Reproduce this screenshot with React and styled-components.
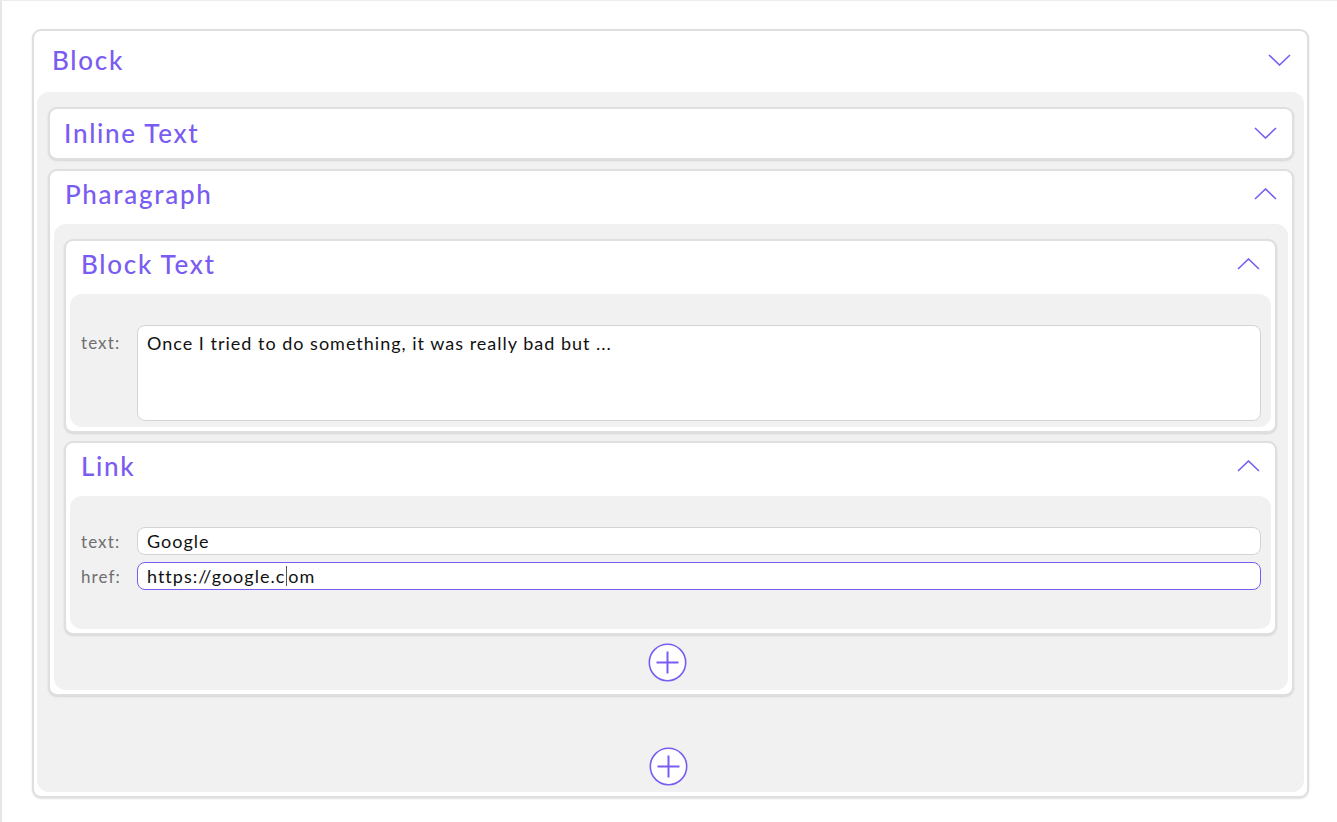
import React from 'react';
import styled, { createGlobalStyle } from 'styled-components';

const purple = '#7a5cf2';

const GlobalStyle = createGlobalStyle`
  html, body {
    margin: 0;
    background: #ffffff;
    font-family: 'Lato', 'Noto Sans', sans-serif;
  }
  * {
    box-sizing: border-box;
  }
`;

const Page = styled.div`
  min-height: 822px;
  border-left: 2px solid #e6e6e6;
  border-top: 1px solid #ececec;
  padding: 28px 28px 0 30px;
`;

const Card = styled.section`
  background: #ffffff;
  border: 2px solid #dfdfdf;
  border-radius: 9px;
  box-shadow: 0 1px 2px rgba(0, 0, 0, 0.12);
  padding: ${(p) => (p.$outer ? '0 3px 4px' : p.$open ? '0 4px 4px' : '0')};
`;

const Header = styled.div`
  display: flex;
  align-items: center;
  justify-content: space-between;
  height: ${(p) => (p.$outer ? '61px' : '49px')};
  padding: ${(p) =>
    p.$outer ? '0 13px 3px 15px' : p.$open ? '0 11px 3px 11px' : '0 15px 2px 14px'};
`;

const Title = styled.h2`
  margin: 0;
  font-size: 26px;
  font-weight: 500;
  color: ${purple};
  letter-spacing: 1.7px;
`;

const Chevron = styled.svg`
  width: 23px;
  height: 12px;
  flex-shrink: 0;
`;

const Body = styled.div`
  display: flex;
  flex-direction: column;
  gap: ${(p) => p.$gap || 8}px;
  background: #f1f1f1;
  border-radius: 12px;
  margin-top: ${(p) => (p.$outer ? 0 : 4)}px;
  padding: ${(p) => p.$pad};
`;

const FieldRow = styled.label`
  display: flex;
  align-items: ${(p) => (p.$top ? 'flex-start' : 'center')};
`;

const Label = styled.span`
  width: 56px;
  flex-shrink: 0;
  font-size: 17px;
  letter-spacing: 1.1px;
  color: #6f6f6f;
  padding-top: ${(p) => (p.$top ? '7px' : '0')};
`;

const Field = styled.div`
  flex: 1;
  display: flex;
  align-items: ${(p) => (p.$multi ? 'flex-start' : 'center')};
  height: ${(p) => (p.$multi ? '96px' : '28px')};
  background: #ffffff;
  border: 1.5px solid ${(p) => (p.$focused ? purple : '#d4d4d4')};
  border-radius: 8px;
  padding: ${(p) => (p.$multi ? '7px 9px' : '0 9px')};
  font-size: 18px;
  line-height: 20px;
  letter-spacing: 1px;
  color: #111111;
  white-space: pre;
`;

const Caret = styled.span`
  display: inline-block;
  width: 1px;
  height: 20px;
  background: #555555;
  margin: 0 1px;
`;

const AddRow = styled.div`
  display: flex;
  justify-content: center;
  padding-right: 6px;
  margin-top: ${(p) => p.$offset || 0}px;
`;

const AddButton = styled.button`
  width: 39px;
  height: 39px;
  padding: 0;
  border: none;
  background: transparent;
  cursor: pointer;
  display: flex;
  align-items: center;
  justify-content: center;
`;

const ChevronIcon = ({ up }) => (
  <Chevron viewBox="0 0 23 12" fill="none">
    <polyline
      points={up ? '1,11 11.5,1 22,11' : '1,1 11.5,11 22,1'}
      stroke={purple}
      strokeWidth="1.6"
      strokeLinejoin="miter"
    />
  </Chevron>
);

const PlusIcon = () => (
  <svg width="39" height="39" viewBox="0 0 39 39" fill="none">
    <circle cx="19.5" cy="19.5" r="18.2" fill="#ffffff" stroke={purple} strokeWidth="1.6" />
    <line x1="8.5" y1="19.5" x2="30.5" y2="19.5" stroke={purple} strokeWidth="2" />
    <line x1="19.5" y1="8.5" x2="19.5" y2="30.5" stroke={purple} strokeWidth="2" />
  </svg>
);

const Add = ({ offset }) => (
  <AddRow $offset={offset}>
    <AddButton type="button" aria-label="add">
      <PlusIcon />
    </AddButton>
  </AddRow>
);

const Section = ({ title, open, outer, pad, gap, children }) => (
  <Card $outer={outer} $open={open}>
    <Header $outer={outer} $open={open}>
      <Title>{title}</Title>
      <ChevronIcon up={open && !outer} />
    </Header>
    {open && (
      <Body $outer={outer} $pad={pad} $gap={gap}>
        {children}
      </Body>
    )}
  </Card>
);

const App = () => {
  return (
    <Page>
      <GlobalStyle />
      <Section title="Block" open outer pad="15px 10px 6px 11px" gap={9}>
        <Section title="Inline Text" />
        <Section title="Pharagraph" open pad="15px 11px 8px 10px" gap={8}>
          <Section title="Block Text" open pad="31px 10px 6px 11px">
            <FieldRow $top>
              <Label $top>text:</Label>
              <Field $multi>Once I tried to do something, it was really bad but ...</Field>
            </FieldRow>
          </Section>
          <Section title="Link" open pad="31px 10px 39px 11px" gap={7}>
            <FieldRow>
              <Label>text:</Label>
              <Field>Google</Field>
            </FieldRow>
            <FieldRow>
              <Label>href:</Label>
              <Field $focused>
                https://google.c
                <Caret />
                om
              </Field>
            </FieldRow>
          </Section>
          <Add />
        </Section>
        <Add offset={42} />
      </Section>
    </Page>
  );
};

export default App;
